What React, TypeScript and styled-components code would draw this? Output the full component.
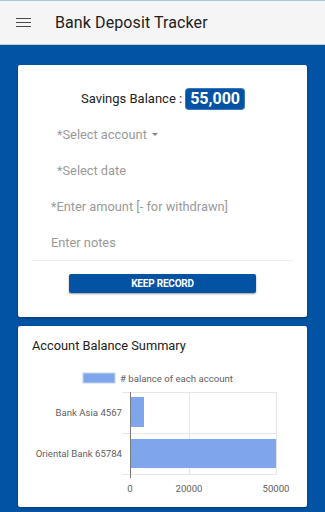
import React from "react";
import styled, { createGlobalStyle } from "styled-components";

const Global = createGlobalStyle`
  html, body { margin: 0; padding: 0; background: #0353a4; }
  body { font-family: Roboto, "Noto Sans", Arial, sans-serif; }
  * { box-sizing: border-box; }
`;

const Page = styled.div`
  width: 325px;
  min-height: 512px;
  background: #0353a4;
  display: flex;
  flex-direction: column;
`;

const Header = styled.header`
  height: 45px;
  background: #f5f5f5;
  border-top: 1px solid #a9c8dc;
  border-bottom: 1px solid #c9ccd2;
  display: flex;
  align-items: center;
  padding-left: 16px;
  gap: 24px;
`;

const Burger = styled.div`
  width: 15px;
  display: flex;
  flex-direction: column;
  gap: 2.5px;
  span {
    display: block;
    height: 1.6px;
    background: #4a4a4a;
  }
`;

const Title = styled.h1`
  margin: 0;
  font-size: 16px;
  font-weight: 400;
  color: #212121;
  letter-spacing: 0.1px;
`;

const Main = styled.main`
  padding: 20px 18px 5px;
  display: flex;
  flex-direction: column;
  gap: 9px;
`;

const Card = styled.section<{ $h: number }>`
  background: #fff;
  border-radius: 2px;
  box-shadow: 0 1px 3px rgba(0, 0, 0, 0.35);
  height: ${(p) => p.$h}px;
  display: flex;
  flex-direction: column;
`;

const FormBody = styled.div`
  padding: 14px 14px 0;
  display: flex;
  flex-direction: column;
`;

const BalanceRow = styled.div`
  height: 37px;
  display: flex;
  align-items: center;
  justify-content: center;
  gap: 4px;
  font-size: 13px;
  color: #222;
  padding-top: 2px;
`;

const Badge = styled.span`
  background: #0353a4;
  color: #fff;
  font-weight: 700;
  font-size: 16px;
  padding: 0 4px;
  height: 20px;
  line-height: 20px;
  border-radius: 3px;
  box-shadow: 0 0 0 1px #3a78bd;
`;

const Field = styled.div<{ $indent: number }>`
  height: 36px;
  display: flex;
  align-items: center;
  padding-left: ${(p) => p.$indent}px;
  font-size: 12.8px;
  color: #9a9a9a;
  gap: 5px;
`;

const Caret = styled.span`
  width: 0;
  height: 0;
  border-left: 3.5px solid transparent;
  border-right: 3.5px solid transparent;
  border-top: 3.5px solid #8a8a8a;
  margin-top: 1px;
`;

const Divider = styled.hr`
  margin: 0;
  border: none;
  border-top: 1px solid #ececec;
`;

const ButtonRow = styled.div`
  display: flex;
  justify-content: center;
  padding-top: 13px;
`;

const Button = styled.button`
  width: 187px;
  height: 19px;
  background: #0353a4;
  color: #fff;
  border: none;
  border-radius: 2px;
  font-family: Roboto, Arial, sans-serif;
  font-weight: 700;
  font-size: 10px;
  letter-spacing: -0.2px;
  box-shadow: 0 1px 2px rgba(0, 0, 0, 0.4);
  padding: 0;
`;

const CardTitle = styled.h2`
  margin: 0;
  height: 40px;
  padding: 12px 14px 0;
  font-size: 12.8px;
  font-weight: 400;
  color: #222;
`;

const ChartSvg = styled.svg`
  display: block;
`;

const OX = 18;
const OY = 366;

const BarChart: React.FC = () => {
  const x = (v: number) => v - OX;
  const y = (v: number) => v - OY;
  const barFill = "#7fa6ec";
  const grid = "#e6e6e6";
  const txt = { fontFamily: "Roboto, Arial, sans-serif", fontSize: 9.6, fill: "#5f5f5f" };
  return (
    <ChartSvg width={287} height={141} viewBox="0 0 287 141">
      <rect x={x(83)} y={y(373)} width={32} height={10} fill={barFill} stroke="#c5d5f2" strokeWidth={1} />
      <text x={x(120)} y={y(381.5)} {...txt}>
        # balance of each account
      </text>
      <line x1={x(122)} y1={y(392.5)} x2={x(277)} y2={y(392.5)} stroke={grid} />
      <line x1={x(122)} y1={y(433.5)} x2={x(277)} y2={y(433.5)} stroke={grid} />
      <line x1={x(122)} y1={y(474.5)} x2={x(277)} y2={y(474.5)} stroke={grid} />
      <line x1={x(189.5)} y1={y(392)} x2={x(189.5)} y2={y(475)} stroke={grid} />
      <line x1={x(276.5)} y1={y(392)} x2={x(276.5)} y2={y(475)} stroke={grid} />
      <rect x={x(130)} y={y(397)} width={14} height={30} fill={barFill} />
      <rect x={x(130)} y={y(439)} width={146} height={29} fill={barFill} />
      <line x1={x(130.5)} y1={y(392)} x2={x(130.5)} y2={y(478)} stroke="#7a7a7a" />
      <text x={x(122)} y={y(415.5)} textAnchor="end" {...txt}>
        Bank Asia 4567
      </text>
      <text x={x(122)} y={y(456.5)} textAnchor="end" {...txt}>
        Oriental Bank 65784
      </text>
      <text x={x(130)} y={y(492)} textAnchor="middle" {...txt}>
        0
      </text>
      <text x={x(189)} y={y(492)} textAnchor="middle" {...txt}>
        20000
      </text>
      <text x={x(276)} y={y(492)} textAnchor="middle" {...txt}>
        50000
      </text>
    </ChartSvg>
  );
};

export default function App() {
  return (
    <Page>
      <Global />
      <Header>
        <Burger>
          <span />
          <span />
          <span />
        </Burger>
        <Title>Bank Deposit Tracker</Title>
      </Header>
      <Main>
        <Card $h={252}>
          <FormBody>
            <BalanceRow>
              Savings Balance : <Badge>55,000</Badge>
            </BalanceRow>
            <Field $indent={25}>
              *Select account <Caret />
            </Field>
            <Field $indent={25}>*Select date</Field>
            <Field $indent={19}>*Enter amount [- for withdrawn]</Field>
            <Field $indent={19}>Enter notes</Field>
            <Divider />
            <ButtonRow>
              <Button>KEEP RECORD</Button>
            </ButtonRow>
          </FormBody>
        </Card>
        <Card $h={181}>
          <CardTitle>Account Balance Summary</CardTitle>
          <BarChart />
        </Card>
      </Main>
    </Page>
  );
}
